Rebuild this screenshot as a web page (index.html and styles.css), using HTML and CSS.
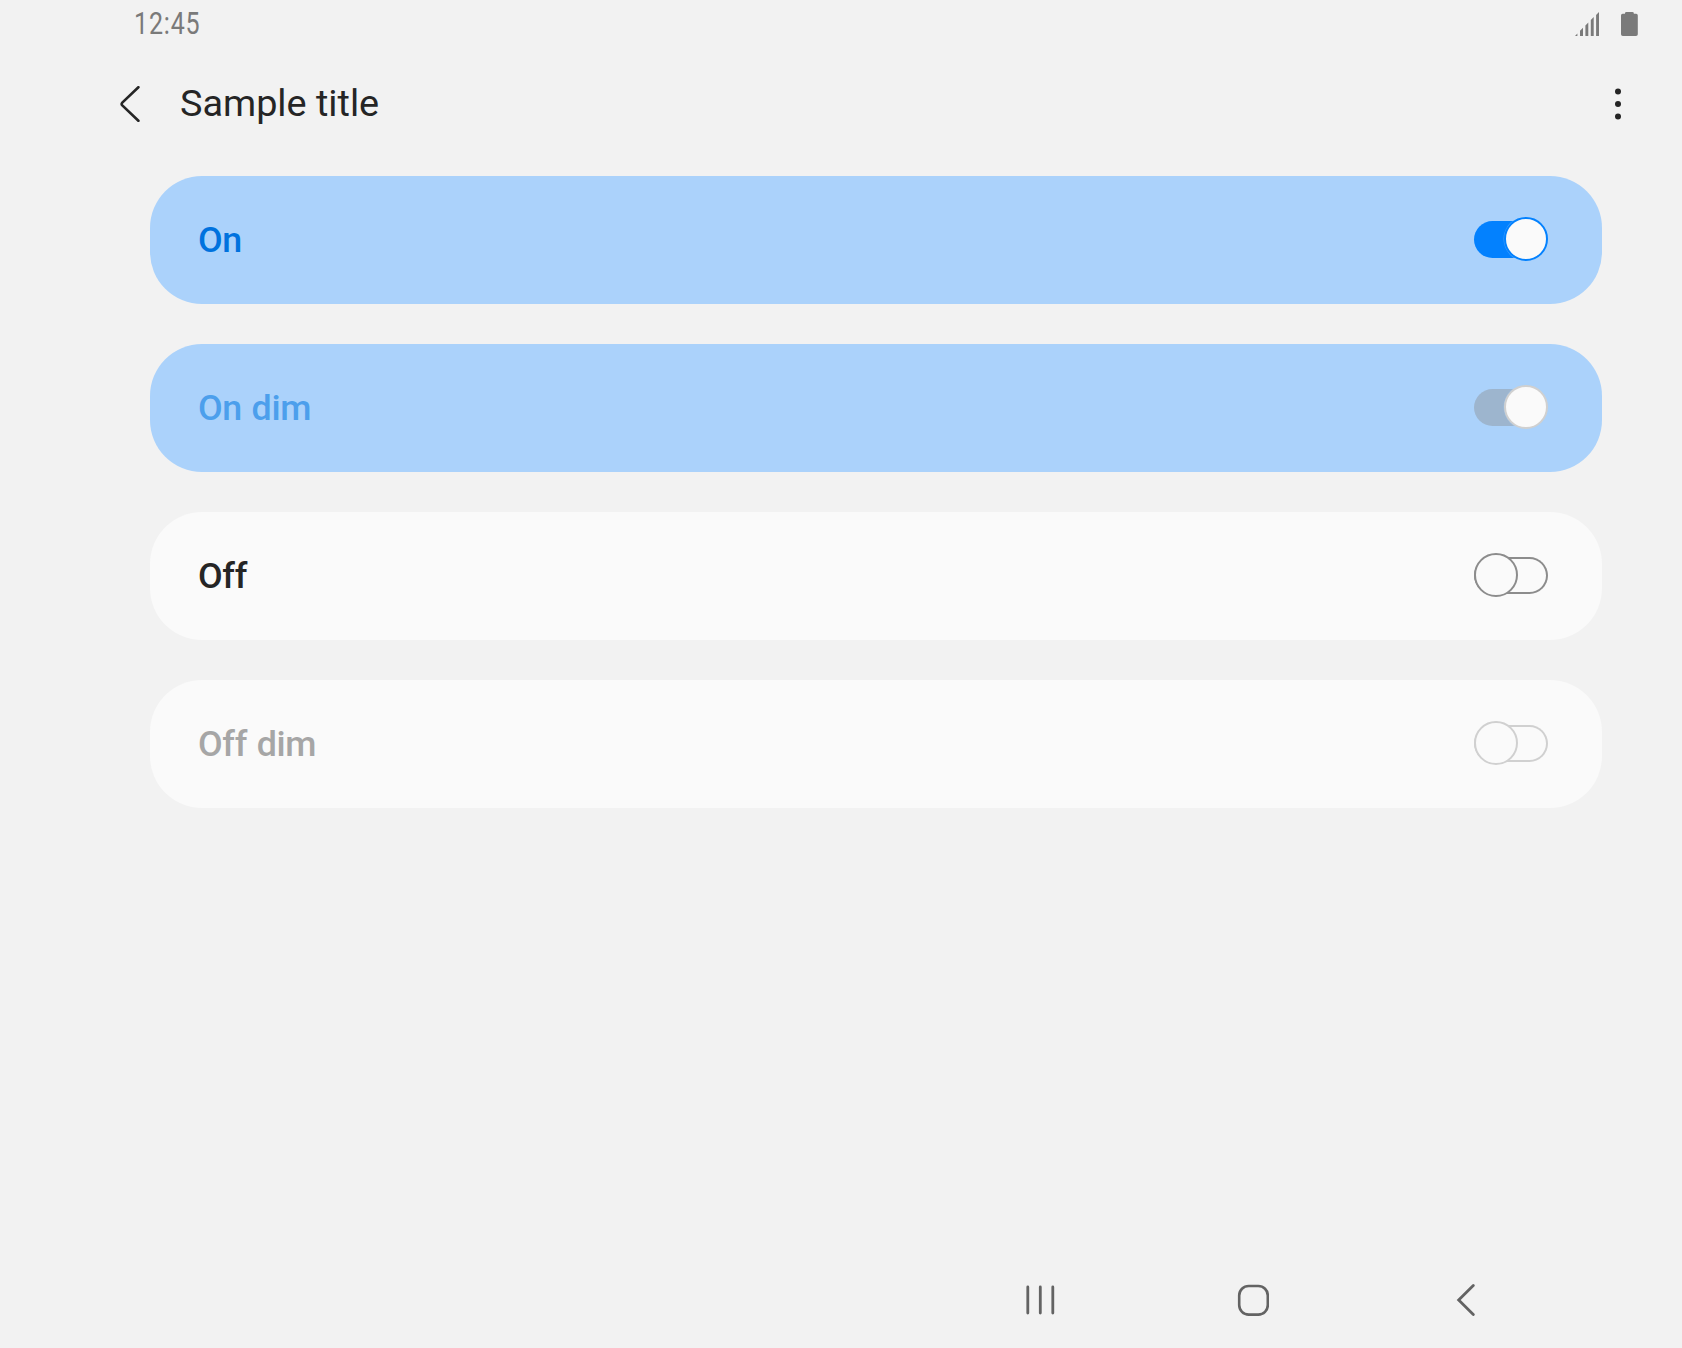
FILE: index.html
```html
<!DOCTYPE html>
<html lang="en">
<head>
<meta charset="utf-8">
<title>Sample title</title>
<link rel="stylesheet" href="styles.css">
</head>
<body>
<div class="screen">
  <div class="status-bar">
    <span class="clock">12:45</span>
    <div class="status-icons">
      <svg class="signal" viewBox="0 0 24 24" width="24" height="24" fill="#7a7a7a">
        <path d="M0 24L2.4 21.6V24ZM5 24V18.7L8 15.7V24ZM10.4 24V13.4L13.3 10.5V24ZM15.8 24V8L18.7 5V24ZM21.1 24V2.9L24 0V24Z"/>
      </svg>
      <svg class="battery" viewBox="0 0 17 24" width="17" height="24" fill="#7a7a7a">
        <path d="M5.3 0h6.2a1.4 1.4 0 0 1 1.3 1.8h2.4a1.6 1.6 0 0 1 1.6 1.6v18.8a1.8 1.8 0 0 1-1.8 1.8H1.8A1.8 1.8 0 0 1 0 22.2V3.4a1.6 1.6 0 0 1 1.6-1.6H4A1.4 1.4 0 0 1 5.3 0Z"/>
      </svg>
    </div>
  </div>
  <header class="app-bar">
    <svg class="back" viewBox="0 0 20 36" width="20" height="36" fill="none" stroke="#252525" stroke-width="2.6" stroke-linecap="round">
      <path d="M18.4 1.2L2.3 16.6Q1 18 2.3 19.4L18.4 34.8"/>
    </svg>
    <h1 class="title">Sample title</h1>
    <svg class="more" viewBox="0 0 6 32" width="6" height="32" fill="#252525">
      <circle cx="3" cy="3.4" r="3"/><circle cx="3" cy="16" r="3"/><circle cx="3" cy="28.5" r="3"/>
    </svg>
  </header>
  <main class="list">
    <div class="card on"><span class="label">On</span><span class="switch"><span class="knob"></span></span></div>
    <div class="card on dim"><span class="label">On dim</span><span class="switch"><span class="knob"></span></span></div>
    <div class="card off"><span class="label">Off</span><span class="switch"><span class="knob"></span></span></div>
    <div class="card off dim"><span class="label">Off dim</span><span class="switch"><span class="knob"></span></span></div>
  </main>
  <nav class="nav-bar">
    <svg viewBox="0 0 32 32" width="32" height="32" fill="none" stroke="#636363" stroke-width="2.8" stroke-linecap="round">
      <path d="M3.8 3V29M16.3 3V29M28.8 3V29"/>
    </svg>
    <svg viewBox="0 0 32 32" width="32" height="32" fill="none" stroke="#636363" stroke-width="2.6">
      <rect x="2.2" y="2" width="28.6" height="28.6" rx="9.5"/>
    </svg>
    <svg viewBox="0 0 32 32" width="32" height="32" fill="none" stroke="#636363" stroke-width="2.8" stroke-linecap="round">
      <path d="M23.3 1.6L8.7 16L23.3 30.4"/>
    </svg>
  </nav>
</div>
</body>
</html>
```
FILE: styles.css
```css
* { box-sizing: border-box; }

body {
  margin: 0;
  background: #f2f2f2;
  font-family: Roboto, sans-serif;
  color: #252525;
}

.screen {
  width: 1682px;
  height: 1348px;
  display: flex;
  flex-direction: column;
}

.status-bar {
  height: 48px;
  padding: 0 44px 0 134px;
  display: flex;
  align-items: center;
  justify-content: space-between;
}

.clock {
  font-size: 30.5px;
  line-height: 48px;
  letter-spacing: 1px;
  color: #7a7a7a;
  transform: scaleX(0.82);
  transform-origin: left;
}

.status-icons {
  display: flex;
  gap: 22px;
}

.app-bar {
  height: 112px;
  padding: 0 61px 0 120px;
  display: flex;
  align-items: center;
}

.title {
  margin: 0 auto 2px 40px;
  font-size: 37.8px;
  line-height: 48px;
  font-weight: 400;
}

.list {
  flex: 1;
  padding: 16px 80px 0 150px;
  display: flex;
  flex-direction: column;
  gap: 40px;
}

.card {
  height: 128px;
  padding: 0 54px 0 48px;
  border-radius: 52px;
  display: flex;
  align-items: center;
  justify-content: space-between;
  background: #fafafa;
}

.card.on { background: #abd2fb; }

.label {
  font-size: 35.8px;
  line-height: 48px;
  font-weight: 500;
  letter-spacing: -0.3px;
  word-spacing: 1px;
}

.on .label { color: #0072de; }
.on.dim .label { color: #4c9fec; }
.off.dim .label { color: #a6a6a6; }

.switch {
  width: 74px;
  height: 37px;
  margin-bottom: 1px;
  border-radius: 19px;
  display: flex;
  align-items: center;
}

.knob {
  flex: none;
  width: 44px;
  height: 44px;
  margin-top: -1px;
  border: 2px solid #8c8c8c;
  border-radius: 50%;
  background: #fafafa;
}

.on .switch {
  justify-content: flex-end;
  background: linear-gradient(to right, #0381fe 52px, transparent 52px);
}
.on .knob {
  border-color: #0381fe;
  box-shadow: 0 0 0 0.5px rgba(171, 210, 251, 0.4);
}
.on.dim .switch { background: linear-gradient(to right, #9db5ce 52px, transparent 52px); }
.on.dim .knob { border-color: #d0d0d0; }

.off .switch { box-shadow: inset 0 0 0 2px #8c8c8c; }
.off.dim .switch { box-shadow: inset 0 0 0 2px #d0d0d0; }
.off.dim .knob { border-color: #d0d0d0; }

.nav-bar {
  height: 96px;
  padding: 0 200px 0 1024px;
  display: flex;
  align-items: center;
  justify-content: space-between;
}
```
